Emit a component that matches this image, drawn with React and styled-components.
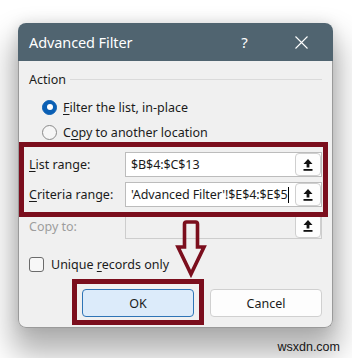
import React from "react";
import styled, { createGlobalStyle } from "styled-components";

const Global = createGlobalStyle`
  html, body { margin: 0; padding: 0; background: #ffffff; }
  body { width: 352px; height: 358px; overflow: hidden; font-family: "Noto Sans", "Open Sans", sans-serif; color: #1b1b1b; }
  * { box-sizing: border-box; }
`;

const Page = styled.div`
  width: 352px;
  height: 358px;
  padding: 23px 0 0 18px;
  display: flex;
  flex-direction: column;
`;

const Dialog = styled.div`
  position: relative;
  width: 315px;
  display: flex;
  flex-direction: column;
  border-radius: 8px;
  box-shadow: 0 20px 30px 6px rgba(0, 0, 0, 0.3), 0 0 14px rgba(0, 0, 0, 0.1);
`;

const TitleBar = styled.div`
  height: 38px;
  background: #506470;
  border-radius: 8px 8px 0 0;
  display: flex;
  align-items: center;
  padding-left: 11px;
  color: #ffffff;
`;

const Title = styled.div`
  flex: 1;
  font-size: 14.5px;
  letter-spacing: -0.1px;
`;

const TitleButton = styled.div`
  width: 57px;
  height: 38px;
  display: flex;
  align-items: center;
  justify-content: center;
  font-size: 15px;
  margin-right: ${(p) => (p.$last ? "3px" : "0")};
`;

const Body = styled.div`
  background: #f0f0f0;
  border: 1px solid #9a9a9a;
  border-top: none;
  border-radius: 0 0 8px 8px;
  padding: 9px 10px 10px 10px;
  display: flex;
  flex-direction: column;
  font-size: 12.5px;
`;

const Legend = styled.div`
  height: 18px;
  display: flex;
  align-items: center;
  gap: 4px;
`;

const LegendLine = styled.div`
  flex: 1;
  height: 1px;
  background: #dadada;
`;

const RadioGroup = styled.div`
  margin-top: 7px;
  margin-left: 13px;
  display: flex;
  flex-direction: column;
  gap: 1px;
`;

const RadioRow = styled.div`
  height: 24px;
  display: flex;
  align-items: center;
  gap: 6px;
`;

const RadioMark = styled.span`
  width: 15px;
  height: 15px;
  border-radius: 50%;
  flex: none;
  display: flex;
  align-items: center;
  justify-content: center;
  background: ${(p) => (p.$on ? "#0a5fb4" : "#f6f6f6")};
  border: 1px solid ${(p) => (p.$on ? "#0a5fb4" : "#8a8a8a")};
  &::after {
    content: "";
    display: ${(p) => (p.$on ? "block" : "none")};
    width: 6px;
    height: 6px;
    border-radius: 50%;
    background: #ffffff;
  }
`;

const U = styled.span`
  text-decoration: underline;
  text-underline-offset: 2px;
  text-decoration-thickness: 1px;
`;

const Highlight = styled.div`
  position: relative;
  z-index: 1;
  margin: -2px -6px 0 -10px;
  border: 5px solid #7b0e1d;
  padding: 5px 1px 5px 5px;
  display: flex;
  flex-direction: column;
  gap: 5px;
`;

const FieldRow = styled.div`
  display: flex;
  align-items: center;
  margin-top: ${(p) => p.$mt || "0"};
`;

const Label = styled.div`
  width: 96px;
  flex: none;
  color: ${(p) => (p.$disabled ? "#9d9d9d" : "#1b1b1b")};
`;

const Field = styled.div`
  flex: 1;
  height: ${(p) => p.$h || "25px"};
  display: flex;
  align-items: stretch;
  border: 1px solid ${(p) => (p.$disabled ? "#cdcdcd" : "#bcbcbc")};
  background: ${(p) => (p.$disabled ? "#f0f0f0" : "#ffffff")};
`;

const FieldText = styled.div`
  flex: 1;
  display: flex;
  align-items: center;
  padding-left: 5px;
  white-space: nowrap;
  overflow: hidden;
  letter-spacing: -0.1px;
`;

const Caret = styled.span`
  display: inline-block;
  width: 1px;
  height: 16px;
  margin-left: 1px;
  background: #000000;
`;

const PickButton = styled.div`
  width: 26px;
  flex: none;
  display: flex;
  align-items: center;
  justify-content: center;
  background: #fdfdfd;
  border: 1px solid #cfcfcf;
  border-radius: 4px;
`;

const CheckRow = styled.div`
  margin-top: 15px;
  height: 20px;
  display: flex;
  align-items: center;
  gap: 7px;
`;

const CheckBox = styled.span`
  width: 15px;
  height: 15px;
  border: 1px solid #6b6b6b;
  border-radius: 3px;
  background: #f7f7f7;
  flex: none;
`;

const ButtonRow = styled.div`
  margin-top: 15px;
  display: flex;
  justify-content: flex-end;
  gap: 16px;
`;

const OkFrame = styled.div`
  position: relative;
  z-index: 1;
  margin: -10px -10px -8px -10px;
  border: 5px solid #7b0e1d;
  padding: 5px 5px 3px 5px;
  display: flex;
`;

const Button = styled.div`
  width: 112px;
  height: 28px;
  display: flex;
  align-items: center;
  justify-content: center;
  border-radius: 4px;
  font-size: 12.5px;
  background: ${(p) => (p.$primary ? "#dcebfa" : "#fdfdfd")};
  border: 1px solid ${(p) => (p.$primary ? "#2e74b6" : "#d0d0d0")};
`;

const ArrowMark = styled.svg`
  position: absolute;
  left: 158px;
  top: 198px;
  z-index: 2;
  overflow: visible;
`;

const Watermark = styled.div`
  margin-top: 12px;
  padding-right: 12px;
  align-self: stretch;
  margin-left: -18px;
  text-align: right;
  font-family: "Liberation Sans", Arial, sans-serif;
  font-size: 12.5px;
  color: #222222;
`;

const UploadIcon = () => (
  <svg width="10" height="12" viewBox="0 0 10 12">
    <path d="M5 0 L9.5 5 L6.4 5 L6.4 8.6 L3.6 8.6 L3.6 5 L0.5 5 Z" fill="#111" />
    <rect x="0.5" y="10" width="9" height="1.8" fill="#111" />
  </svg>
);

const CloseIcon = () => (
  <svg width="13" height="13" viewBox="0 0 13 13">
    <path d="M0.5 0.5 L12.5 12.5 M12.5 0.5 L0.5 12.5" stroke="#ffffff" strokeWidth="1.1" />
  </svg>
);

export default function App() {
  return (
    <>
      <Global />
      <Page>
        <Dialog>
          <TitleBar>
            <Title>Advanced Filter</Title>
            <TitleButton>?</TitleButton>
            <TitleButton $last>
              <CloseIcon />
            </TitleButton>
          </TitleBar>
          <Body>
            <Legend>
              <span>Action</span>
              <LegendLine />
            </Legend>
            <RadioGroup>
              <RadioRow>
                <RadioMark $on />
                <span>
                  <U>F</U>ilter the list, in-place
                </span>
              </RadioRow>
              <RadioRow>
                <RadioMark />
                <span>
                  C<U>o</U>py to another location
                </span>
              </RadioRow>
            </RadioGroup>
            <Highlight>
              <FieldRow>
                <Label>
                  <U>L</U>ist range:
                </Label>
                <Field>
                  <FieldText>$B$4:$C$13</FieldText>
                  <PickButton>
                    <UploadIcon />
                  </PickButton>
                </Field>
              </FieldRow>
              <FieldRow>
                <Label>
                  <U>C</U>riteria range:
                </Label>
                <Field>
                  <FieldText>
                    'Advanced Filter'!$E$4:$E$5
                    <Caret />
                  </FieldText>
                  <PickButton>
                    <UploadIcon />
                  </PickButton>
                </Field>
              </FieldRow>
            </Highlight>
            <FieldRow $mt="-4px">
              <Label $disabled>Copy to:</Label>
              <Field $disabled $h="26px">
                <FieldText />
                <PickButton>
                  <UploadIcon />
                </PickButton>
              </Field>
            </FieldRow>
            <CheckRow>
              <CheckBox />
              <span>
                Unique <U>r</U>ecords only
              </span>
            </CheckRow>
            <ButtonRow>
              <OkFrame>
                <Button $primary>OK</Button>
              </OkFrame>
              <Button>Cancel</Button>
            </ButtonRow>
          </Body>
          <ArrowMark width="30" height="56" viewBox="0 0 30 56">
            <path
              d="M8.5 3 Q8.5 1 10.5 1 L19.5 1 Q21.5 1 21.5 3 L21.5 26 L28 26 L15 53 L2 26 L8.5 26 Z"
              fill="none"
              stroke="#7b0e1d"
              strokeWidth="3.6"
              strokeLinejoin="miter"
            />
          </ArrowMark>
        </Dialog>
        <Watermark>wsxdn.com</Watermark>
      </Page>
    </>
  );
}
